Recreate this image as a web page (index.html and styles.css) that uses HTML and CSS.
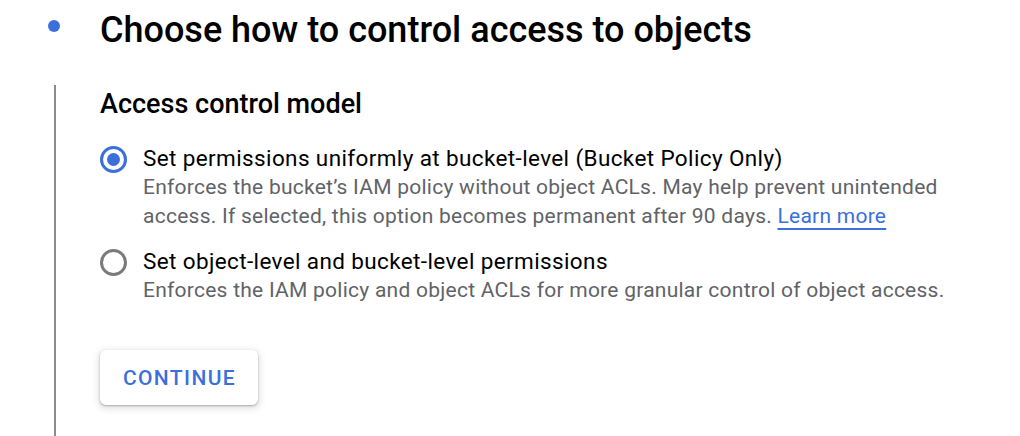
FILE: index.html
```html
<!DOCTYPE html>
<html lang="en">
<head>
<meta charset="utf-8">
<link rel="stylesheet" href="styles.css">
</head>
<body>
<div class="step">
  <div class="step-header">
    <div class="bullet-col"><span class="bullet"></span></div>
    <h1 class="title">Choose how to control access to objects</h1>
  </div>
  <div class="step-body">
    <h2 class="section-title">Access control model</h2>
    <div class="options">
      <label class="option">
        <span class="radio checked"><span class="radio-dot"></span></span>
        <span class="option-text">
          <span class="option-label">Set permissions uniformly at bucket-level (Bucket Policy Only)</span>
          <span class="option-desc">Enforces the bucket’s IAM policy without object ACLs. May help prevent unintended access. If selected, this option becomes permanent after 90 days. <a class="link" href="#">Learn more</a></span>
        </span>
      </label>
      <label class="option">
        <span class="radio"></span>
        <span class="option-text">
          <span class="option-label">Set object-level and bucket-level permissions</span>
          <span class="option-desc">Enforces the IAM policy and object ACLs for more granular control of object access.</span>
        </span>
      </label>
    </div>
    <button class="btn" type="button">CONTINUE</button>
  </div>
</div>
</body>
</html>
```
FILE: styles.css
```css
html, body {
  margin: 0;
  padding: 0;
  background: #ffffff;
  font-family: Roboto, "Liberation Sans", Arial, sans-serif;
  color: #000000;
}

.step {
  width: 1020px;
  height: 436px;
  overflow: hidden;
}

.step-header {
  display: flex;
  align-items: flex-start;
  padding-top: 10px;
}

.bullet-col {
  width: 100px;
  flex: none;
  padding-left: 48px;
  padding-top: 10px;
  box-sizing: border-box;
}

.bullet {
  display: block;
  width: 12px;
  height: 12px;
  border-radius: 50%;
  background: #3b6fdb;
}

.title {
  margin: 0;
  font-size: 36px;
  font-weight: 500;
  line-height: 40px;
  color: #000;
}

.step-body {
  margin-top: 35px;
  margin-left: 54px;
  border-left: 2px solid #8c8c8c;
  padding: 3px 0 40px 44px;
}

.section-title {
  margin: 0;
  font-size: 27px;
  font-weight: 500;
  line-height: 32px;
  color: #000;
}

.options {
  display: flex;
  flex-direction: column;
  gap: 15px;
  margin-top: 23px;
}

.option {
  display: flex;
  gap: 16px;
  align-items: flex-start;
}

.radio {
  flex: none;
  width: 27px;
  height: 27px;
  box-sizing: border-box;
  border: 3px solid #7a7a7a;
  border-radius: 50%;
  display: flex;
  align-items: center;
  justify-content: center;
  margin-top: 3px;
}

.radio.checked {
  border-color: #3b6fdb;
}

.radio-dot {
  width: 13px;
  height: 13px;
  border-radius: 50%;
  background: #3b6fdb;
}

.option-text {
  display: flex;
  flex-direction: column;
}

.option-label {
  font-size: 22.5px;
  letter-spacing: 0.38px;
  line-height: 30px;
  color: #000;
}

.option-desc {
  font-size: 21px;
  letter-spacing: 0.25px;
  line-height: 29px;
  color: #5f6368;
  max-width: 820px;
}

.link {
  color: #3b6fdb;
  text-decoration: underline;
  text-underline-offset: 5px;
  text-decoration-thickness: 2px;
}

.btn {
  display: block;
  margin-top: 45px;
  width: 158px;
  height: 55px;
  background: #fff;
  border: none;
  border-radius: 6px;
  box-shadow: 0 1px 2px rgba(60, 64, 67, 0.35), 0 2px 6px 2px rgba(60, 64, 67, 0.15);
  font-family: Roboto, "Liberation Sans", Arial, sans-serif;
  font-size: 21px;
  font-weight: 500;
  letter-spacing: 1.4px;
  color: #3b6fdb;
  padding: 0 0 0 1px;
}
```
